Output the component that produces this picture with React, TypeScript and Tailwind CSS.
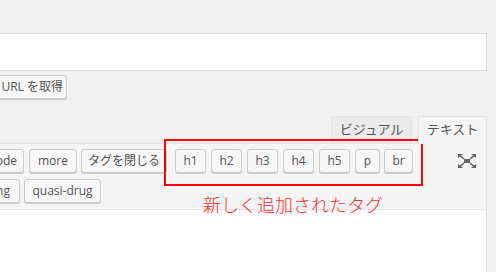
import React from 'react';

const font = { fontFamily: '"Open Sans", "Noto Sans CJK JP", sans-serif' };

function QButton({ label, className = '', right = false }: { label: string; className?: string; right?: boolean }) {
  return (
    <div
      className={`flex h-[24px] shrink-0 items-center whitespace-nowrap rounded-[3px] border border-[#cccccc] bg-[#f7f7f7] text-[12px] leading-none text-[#555555] shadow-[0_1px_0_#cccccc] ${
        right ? 'justify-end' : 'justify-center'
      } ${className}`}
    >
      {label}
    </div>
  );
}

function ExpandIcon() {
  return (
    <svg width="18" height="14" viewBox="0 0 18 14" className="shrink-0">
      <g fill="#666666" stroke="#666666">
        <polygon points="0,0 5,0 0,4" stroke="none" />
        <polygon points="18,0 13,0 18,4" stroke="none" />
        <polygon points="0,14 5,14 0,10" stroke="none" />
        <polygon points="18,14 13,14 18,10" stroke="none" />
        <line x1="1.5" y1="1.2" x2="6" y2="5" strokeWidth="1.6" />
        <line x1="16.5" y1="1.2" x2="12" y2="5" strokeWidth="1.6" />
        <line x1="1.5" y1="12.8" x2="6" y2="9" strokeWidth="1.6" />
        <line x1="16.5" y1="12.8" x2="12" y2="9" strokeWidth="1.6" />
        <rect x="6" y="5" width="6" height="4" stroke="none" />
      </g>
    </svg>
  );
}

export default function App() {
  return (
    <div className="relative h-[272px] w-[496px] overflow-hidden bg-[#f1f1f1]" style={font}>
      <div className="flex w-[487px] flex-col pt-[33px]">
        {/* Title field */}
        <div className="-ml-[10px] h-[38px] w-[497px] border border-[#dddddd] bg-white" />

        {/* Shortlink button */}
        <div className="mt-[4px] flex">
          <QButton label="短縮 URL を取得" right className="-ml-[43px] w-[110px] pr-[3px]" />
        </div>

        {/* Editor tabs */}
        <div className="mt-[17px] flex h-[27px] items-start justify-end gap-[6px]">
          <div className="flex h-[27px] w-[81px] items-center justify-center border border-b-0 border-[#e5e5e5] bg-[#ebebeb] text-[13px] text-[#555555]">
            ビジュアル
          </div>
          <div className="relative z-10 -mb-px flex h-[28px] w-[69px] items-center justify-center border border-b-0 border-[#e5e5e5] bg-[#f5f5f5] pb-px text-[13px] text-[#555555]">
            テキスト
          </div>
        </div>

        {/* Quicktags toolbar */}
        <div className="-ml-[10px] flex w-[497px] flex-col gap-[6px] border border-[#e5e5e5] bg-[#f5f5f5] pb-[6px] pl-[10px] pt-[5px]">
          <div className="flex items-center">
            <QButton label="code" right className="-ml-[27px] w-[50px] pr-[6px]" />
            <QButton label="more" className="ml-[5px] w-[48px]" />
            <QButton label="タグを閉じる" className="ml-[4px] w-[86px]" />
            <QButton label="h1" className="ml-[8px] w-[31px]" />
            <QButton label="h2" className="ml-[5px] w-[31px]" />
            <QButton label="h3" className="ml-[5px] w-[31px]" />
            <QButton label="h4" className="ml-[5px] w-[31px]" />
            <QButton label="h5" className="ml-[5px] w-[31px]" />
            <QButton label="p" className="ml-[5px] w-[25px]" />
            <QButton label="br" className="ml-[4px] w-[29px]" />
            <div className="ml-auto mr-[10px] flex">
              <ExpandIcon />
            </div>
          </div>
          <div className="flex items-center">
            <QButton label="strong" right className="-ml-[41px] w-[60px] pr-[9px]" />
            <QButton label="quasi-drug" className="ml-[4px] w-[77px]" />
          </div>
        </div>

        {/* Editor body */}
        <div className="-ml-[10px] h-[80px] w-[497px] border border-t-0 border-[#e5e5e5] bg-white" />
      </div>

      {/* Annotation */}
      <div className="absolute left-[164px] top-[139px] h-[47px] w-[259px] border-2 border-[#ff0000]" />
      <div
        className="absolute left-[203px] top-[195px] text-[18px] font-light leading-[18px] text-[#ff2a2a]"
        style={{ fontFamily: '"Noto Sans CJK JP", sans-serif' }}
      >
        新しく追加されたタグ
      </div>
    </div>
  );
}
